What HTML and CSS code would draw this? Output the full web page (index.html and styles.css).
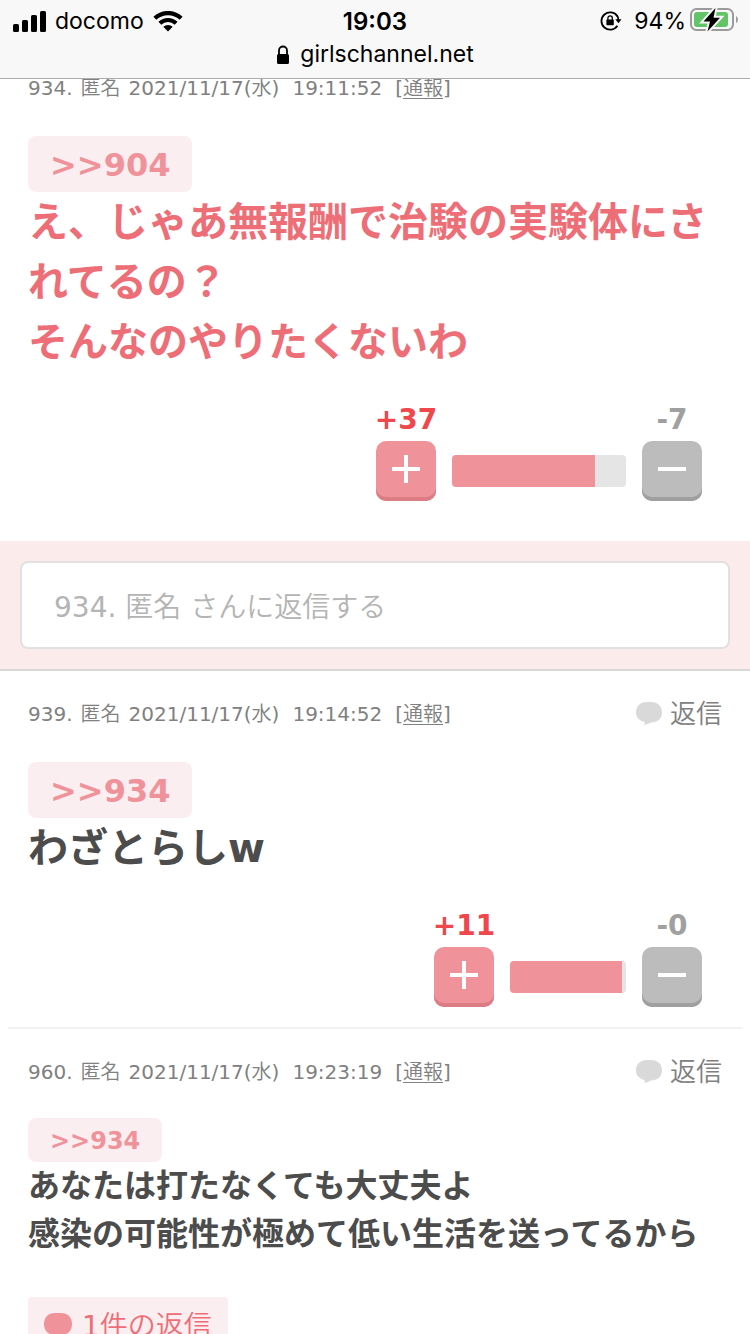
FILE: index.html
```html
<!DOCTYPE html>
<html lang="ja">
<head>
<meta charset="utf-8">
<meta name="viewport" content="width=device-width">
<title>girlschannel.net</title>
<link rel="stylesheet" href="styles.css">
</head>
<body>
<header class="chrome">
  <div class="status">
    <div class="status-side">
      <svg class="signal" width="34" height="22" viewBox="0 0 34 22"><rect x="1" y="13" width="6" height="8" rx="1.5"/><rect x="10" y="9" width="6" height="12" rx="1.5"/><rect x="19" y="4" width="6" height="17" rx="1.5"/><rect x="28" y="0" width="6" height="21" rx="1.5"/></svg>
      <span>docomo</span>
      <svg width="30" height="22" viewBox="0 0 30 22"><path d="M0.4 5.8A21 21 0 0 1 29.6 5.8L26.7 8.8A17 17 0 0 0 3.3 8.8ZM5.4 10.8A14 14 0 0 1 24.6 10.8L21.7 13.7A9.8 9.8 0 0 0 8.3 13.7ZM10.3 15.7A7 7 0 0 1 19.7 15.7L15 20.6Z"/></svg>
    </div>
    <time class="clock">19:03</time>
    <div class="status-side status-right">
      <svg class="lock-rotate" width="22" height="20" viewBox="0 0 22 20"><path d="M17.4 5.2A8.7 8.7 0 1 0 17.4 14.8" fill="none" stroke="#000" stroke-width="1.8"/><path d="M15.3 8.3H21.5L18.5 12.3Z"/><path d="M17 4.6Q18.3 6.5 18.5 9" fill="none" stroke="#000" stroke-width="1.8"/><rect x="6.4" y="8.6" width="7.4" height="5.7" rx="0.8"/><path d="M7.9 9V7.1a2.2 2.2 0 0 1 4.4 0V9" fill="none" stroke="#000" stroke-width="1.3"/></svg>
      <span class="level">94%</span>
      <svg class="battery" width="48" height="24" viewBox="0 0 48 24"><rect x="1" y="1" width="42" height="21" rx="5.5" fill="none" stroke="#9b9b9b" stroke-width="2"/><path d="M46 8q2 1 2 3.500t-2 3.500z" fill="#9b9b9b"/><rect x="4" y="4" width="34" height="15" rx="3" fill="#62c466"/><path d="M25.500 0L13.500 13.500H20L17.500 23.500L30 9.800H23.500Z" stroke="#f7f7f7" stroke-width="4"/><path d="M25.500 0L13.500 13.500H20L17.500 23.500L30 9.800H23.500Z"/></svg>
    </div>
  </div>
  <div class="address">
    <svg width="14" height="20" viewBox="0 0 14 20"><rect x="1" y="9" width="12" height="10" rx="1.500"/><path d="M3 10V5.500a4 4 0 0 1 8 0V10" fill="none" stroke="#000" stroke-width="1.800"/></svg>
    <span>girlschannel.net</span>
  </div>
</header>

<main class="thread">
  <article class="comment comment-open">
    <div class="meta">
      <p class="info"><span class="who"><span>934.</span><span>匿名</span><span>2021/11/17(水)</span></span><time>19:11:52</time><span>[<a href="#report">通報</a>]</span></p>
    </div>
    <div class="body body-large body-hot">
      <a class="anchor" href="#c904">&gt;&gt;904</a>
      <p>え、じゃあ無報酬で治験の実験体にされてるの？<br>そんなのやりたくないわ</p>
    </div>
    <div class="votes">
      <span class="score score-plus">+37</span>
      <span class="score score-minus">-7</span>
      <button class="vote vote-plus" aria-label="プラス"><svg width="28" height="28" viewBox="0 0 28 28"><path d="M0 14H28M14 0V28"/></svg></button>
      <div class="bar bar-wide"><div class="fill" style="width:82.2%"></div></div>
      <button class="vote vote-minus" aria-label="マイナス"><svg width="28" height="28" viewBox="0 0 28 28"><path d="M0 14H28"/></svg></button>
    </div>
  </article>

  <form class="reply-form">
    <input class="reply-input" type="text" aria-label="返信" placeholder="934. 匿名 さんに返信する">
  </form>

  <article class="comment">
    <div class="meta">
      <p class="info"><span class="who"><span>939.</span><span>匿名</span><span>2021/11/17(水)</span></span><time>19:14:52</time><span>[<a href="#report">通報</a>]</span></p>
      <button class="reply"><svg width="26" height="24" viewBox="0 0 26 24"><path d="M11 0H15C22 0 26 4.500 26 10.500C26 17 21 20.500 15 20.500Q12 22 7.600 23Q9 21.500 8.700 20C3.500 19 0 15.500 0 10.500C0 4.500 4 0 11 0Z"/></svg><span>返信</span></button>
    </div>
    <div class="body body-large">
      <a class="anchor" href="#c934">&gt;&gt;934</a>
      <p>わざとらしw</p>
    </div>
    <div class="votes">
      <span class="score score-plus">+11</span>
      <span class="score score-minus">-0</span>
      <button class="vote vote-plus" aria-label="プラス"><svg width="28" height="28" viewBox="0 0 28 28"><path d="M0 14H28M14 0V28"/></svg></button>
      <div class="bar"><div class="fill" style="width:96.5%"></div></div>
      <button class="vote vote-minus" aria-label="マイナス"><svg width="28" height="28" viewBox="0 0 28 28"><path d="M0 14H28"/></svg></button>
    </div>
  </article>

  <hr class="rule">

  <article class="comment">
    <div class="meta">
      <p class="info"><span class="who"><span>960.</span><span>匿名</span><span>2021/11/17(水)</span></span><time>19:23:19</time><span>[<a href="#report">通報</a>]</span></p>
      <button class="reply"><svg width="26" height="24" viewBox="0 0 26 24"><path d="M11 0H15C22 0 26 4.500 26 10.500C26 17 21 20.500 15 20.500Q12 22 7.600 23Q9 21.500 8.700 20C3.500 19 0 15.500 0 10.500C0 4.500 4 0 11 0Z"/></svg><span>返信</span></button>
    </div>
    <div class="body">
      <a class="anchor" href="#c934">&gt;&gt;934</a>
      <p>あなたは打たなくても大丈夫よ<br>感染の可能性が極めて低い生活を送ってるから</p>
    </div>
    <a class="replies" href="#replies"><svg width="28" height="22" viewBox="0 0 28 22"><path d="M11 0H17C24 0 28 4.500 28 11C28 17.500 24 22 17 22H11C4 22 0 17.500 0 11C0 4.500 4 0 11 0Z"/></svg><span>1件の返信</span></a>
  </article>
</main>
</body>
</html>
```
FILE: styles.css
```css
* { box-sizing: border-box; }

body {
  margin: 0;
  background: #fff;
  color: #4c4c4c;
  font-family: "DejaVu Sans", Verdana, "Noto Sans CJK JP", sans-serif;
}

p { margin: 0; }
button { border: 0; padding: 0; background: none; font: inherit; cursor: pointer; }
svg { display: block; flex: none; }

/* Browser chrome */
.chrome {
  position: fixed;
  top: 0;
  left: 0;
  right: 0;
  z-index: 1;
  padding: 5px 12px 7px;
  border-bottom: 1px solid #acacac;
  background: #f8f8f8;
  color: #000;
  font: 23px/33px Inter, sans-serif;
}
.status {
  display: grid;
  grid-template-columns: 1fr auto 1fr;
  align-items: center;
}
.status-side { display: flex; align-items: center; gap: 9px; }
.status-right { justify-content: flex-end; gap: 4px; }
.battery { margin-bottom: 3px; }
.lock-rotate { margin: 0 8px 2px 0; }
.clock { font-size: 24px; font-weight: 600; }
.address { display: flex; align-items: center; justify-content: center; gap: 10px; }

/* Comments */
.thread { padding-top: 45px; }
.comment { padding: 28px 28px 20px; }
.comment-open { padding-bottom: 40px; }
.meta {
  display: flex;
  align-items: center;
  justify-content: space-between;
  height: 30px;
  color: #808080;
  font-size: 20px;
  line-height: 30px;
}
.info { display: flex; gap: 13px; white-space: nowrap; }
.who { display: flex; gap: 8px; }
.info a { color: inherit; text-decoration-thickness: 1px; text-underline-offset: 3px; }
.info, .reply, .reply-input, .replies {
  font-family: "DejaVu Sans", Verdana, "Noto Sans CJK JP DemiLight", "Noto Sans CJK JP Light", "Noto Sans CJK JP", sans-serif;
}
.reply {
  display: flex;
  align-items: center;
  gap: 8px;
  color: #808080;
  font-size: 26px;
}
.reply svg { fill: #d9d9d9; }

.body {
  padding-top: 31px;
  font-size: 32px;
  font-weight: 700;
  line-height: 48px;
}
.body-large { padding-top: 33px; font-size: 40px; line-height: 60px; }
.body-hot { color: #ed6e76; }
.anchor {
  display: block;
  width: fit-content;
  padding: 2px 22px 0;
  border-radius: 8px;
  background: #fbeef1;
  color: #f0929a;
  font-size: 24px;
  line-height: 42px;
  text-decoration: none;
}
.body-large .anchor { font-size: 32px; line-height: 54px; }

/* Votes */
.votes {
  display: grid;
  grid-template-columns: 60px auto 60px;
  justify-content: end;
  align-items: center;
  gap: 5px 16px;
  padding: 32px 20px 0 0;
}
.score {
  display: flex;
  justify-content: center;
  font-size: 28px;
  font-weight: 700;
  line-height: 32px;
}
.score-plus { color: #ee474c; }
.score-minus { grid-column: 3; color: #a0a0a0; }
.vote {
  display: flex;
  justify-content: center;
  height: 60px;
  padding-top: 14px;
  border-radius: 10px;
}
.vote-plus { background: #f0929a; box-shadow: inset 0 -4px #dc7d85; }
.vote-minus { background: #bcbcbc; box-shadow: inset 0 -4px #9f9f9f; }
.vote svg { stroke: #fff; stroke-width: 4; }
.bar {
  width: 116px;
  height: 32px;
  overflow: hidden;
  border-radius: 4px;
  background: #e5e5e5;
}
.bar-wide { width: 174px; }
.fill { height: 100%; background: #f0929a; }

/* Reply form */
.reply-form {
  padding: 20px;
  border-bottom: 2px solid #d9d6d7;
  background: #fbebeb;
}
.reply-input {
  display: block;
  width: 100%;
  height: 88px;
  padding: 4px 32px 0;
  border: 2px solid #e1e1e1;
  border-radius: 8px;
  background: #fff;
  color: #4c4c4c;
  font-size: 28px;
}
.reply-input::placeholder { color: #b4b4b4; opacity: 1; }

.rule { margin: 0 8px; border: 0; border-top: 2px solid #f1f1f1; }

.replies {
  display: flex;
  align-items: center;
  gap: 10px;
  width: fit-content;
  height: 54px;
  margin-top: 39px;
  padding: 0 16px;
  border-radius: 4px;
  background: #fbeef1;
  color: #ed6e76;
  font-size: 28px;
  text-decoration: none;
}
.replies svg { fill: #f0929a; }
```
